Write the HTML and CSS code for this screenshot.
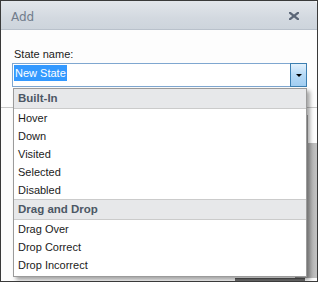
FILE: index.html
```html
<!DOCTYPE html>
<html lang="en">
<head>
    <meta charset="UTF-8">
    <meta name="viewport" content="width=device-width, initial-scale=1.0">
    <title>Add</title>
    <link rel="stylesheet" href="styles.css">
</head>
<body>
    <div class="dialog">
        <div class="titlebar">
            <span class="title">Add</span>
            <svg class="close-icon" width="10" height="8" viewBox="0 0 10 8">
                <path d="M1 0.8 L9 7.2 M9 0.8 L1 7.2" stroke="#5b6677" stroke-width="2.2" stroke-linecap="square"/>
            </svg>
        </div>

        <div class="form">
            <label class="field-label" for="state-name">State name:</label>
            <div class="combo-wrap">
                <div class="combo">
                    <span class="combo-text"><span class="selected">New State</span></span>
                    <span class="combo-button">
                        <svg width="6" height="3" viewBox="0 0 6 3"><path d="M0 0 H6 L3 3 Z" fill="#000"/></svg>
                    </span>
                </div>

                <ul class="dropdown">
                    <li class="group-header">Built-In</li>
                    <li class="option">Hover</li>
                    <li class="option">Down</li>
                    <li class="option">Visited</li>
                    <li class="option">Selected</li>
                    <li class="option">Disabled</li>
                    <li class="group-header second">Drag and Drop</li>
                    <li class="option">Drag Over</li>
                    <li class="option">Drop Correct</li>
                    <li class="option">Drop Incorrect</li>
                </ul>
            </div>
        </div>

        <div class="divider"></div>
        <div class="behind">
            <div class="behind-box"></div>
            <div class="behind-panel"></div>
        </div>

        <div class="footer">
            <div class="footer-button"></div>
        </div>
    </div>
</body>
</html>
```

FILE: styles.css
```css
* {
    box-sizing: border-box;
}
body {
    margin: 0;
    background-color: #fff;
    font-family: 'Liberation Sans', Arial, sans-serif;
    font-size: 11px;
    color: #1b1b1b;
}
.dialog {
    width: 318px;
    height: 282px;
    border: 1px solid #3a3a3a;
    background-color: #fdfdfd;
    display: flex;
    flex-direction: column;
    overflow: hidden;
}
.titlebar {
    height: 29px;
    flex-shrink: 0;
    display: flex;
    justify-content: space-between;
    align-items: flex-start;
    padding: 4px 18px 0 10px;
    background: linear-gradient(#e2e6eb, #d3d9e0 60%, #cdd4dc);
    border-bottom: 1px solid #b9c1cb;
    border-top-right-radius: 4px;
}
.title {
    font-family: 'DejaVu Sans', sans-serif;
    font-size: 12px;
    line-height: 24px;
    color: #717d8c;
}
.close-icon {
    margin-top: 7px;
}
.form {
    padding: 18px 11px 0 11px;
}
.field-label {
    display: block;
    padding-left: 2px;
    line-height: 13px;
}
.combo-wrap {
    position: relative;
    margin-top: 2px;
}
.combo {
    height: 24px;
    width: 295px;
    border: 1px solid #7fa7d0;
    background-color: #fff;
    display: flex;
    justify-content: space-between;
    position: relative;
}
.combo-text {
    padding: 1px 0 0 1px;
}
.selected {
    display: inline-block;
    height: 16px;
    line-height: 16px;
    padding: 0 1px;
    background-color: #3399ff;
    color: #fff;
}
.combo-button {
    width: 17px;
    height: 24px;
    margin: -1px -1px 0 0;
    border: 1px solid #3c7fb1;
    background: linear-gradient(#e3f1fc, #b7daf6 48%, #a1cdf1);
    display: flex;
    justify-content: center;
    align-items: center;
}
.dropdown {
    position: absolute;
    top: 25px;
    left: 1px;
    width: 294px;
    margin: 0;
    padding: 0 0 2px 0;
    list-style: none;
    background-color: #fff;
    border: 1px solid #9b9b9b;
    box-shadow: 3px 3px 4px rgba(0, 0, 0, 0.35);
    z-index: 10;
}
.group-header {
    height: 20px;
    line-height: 19px;
    padding-left: 4px;
    font-weight: bold;
    font-size: 11.5px;
    color: #4c5765;
    background-color: #e7e8ea;
    border-bottom: 1px solid #cbcbcb;
}
.group-header.second {
    height: 21px;
    border-top: 1px solid #cbcbcb;
}
.option {
    height: 18px;
    line-height: 18px;
    padding-left: 4px;
}
.divider {
    margin-top: 20px;
    border-top: 1px solid #c8c8c8;
}
.behind {
    flex: 1;
    display: flex;
    flex-direction: column;
    align-items: flex-end;
}
.behind-box {
    margin: 7px 9px 0 0;
    width: 40px;
    height: 28px;
    border: 1px solid #a8a8a8;
}
.behind-panel {
    flex: 1;
    width: 22px;
    background: linear-gradient(to right, #8d8d8d, #a9a9a9 40%, #c2c2c2);
}
.footer {
    height: 3px;
    flex-shrink: 0;
    display: flex;
    justify-content: flex-end;
    padding-right: 12px;
}
.footer-button {
    width: 70px;
    height: 20px;
    border-top: 1px solid #555;
    background-color: #707070;
}
```
